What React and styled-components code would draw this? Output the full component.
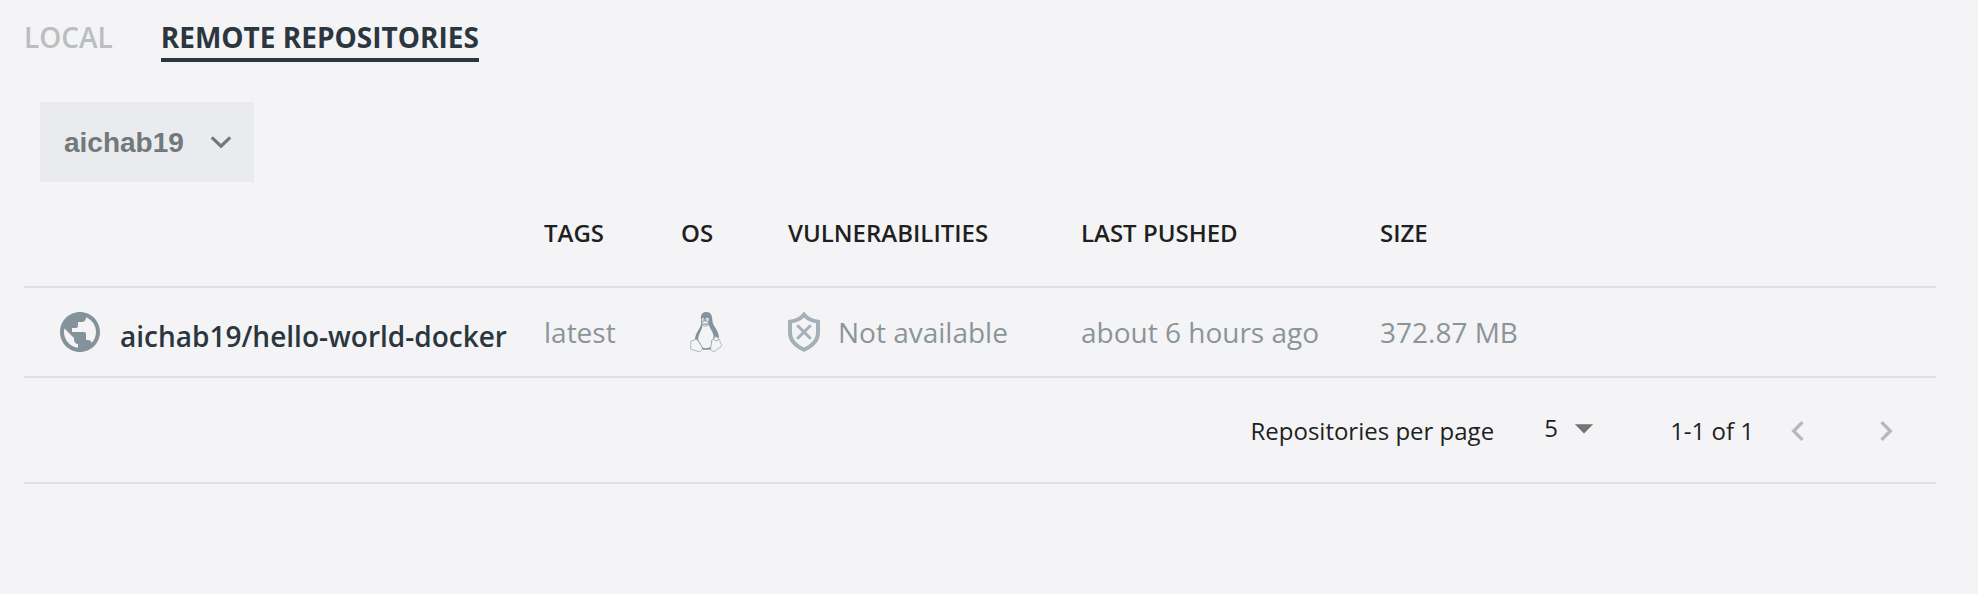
import React from "react";
import styled, { createGlobalStyle } from "styled-components";
import { MdPublic, MdChevronLeft, MdChevronRight, MdArrowDropDown } from "react-icons/md";

const GlobalStyle = createGlobalStyle`
  *, *::before, *::after { box-sizing: border-box; }
  html { background: #f4f4f6; }
  body { margin: 0; background: #f4f4f6; font-family: "Open Sans", sans-serif; color: #1f1f21; }
`;

const Page = styled.main`
  padding: 19px 42px 24px 24px;
`;

const Tabs = styled.nav`
  display: flex;
  align-items: flex-start;
  gap: 48px;
`;

const Tab = styled.button`
  padding: 0 0 3px;
  border: 0;
  border-bottom: 4px solid ${(p) => (p.$active ? "#2b363e" : "transparent")};
  background: none;
  color: ${(p) => (p.$active ? "#2b363e" : "#babebf")};
  font: ${(p) => (p.$active ? 700 : 600)} 28px/36px "Open Sans", sans-serif;
  cursor: pointer;
`;

const AccountPicker = styled.label`
  display: grid;
  align-items: center;
  width: 214px;
  height: 80px;
  margin: 40px 0 0 16px;
  background: #e9ebee;
  color: #71797b;

  > * { grid-area: 1 / 1; }
  > svg { justify-self: end; margin-right: 22px; pointer-events: none; }
`;

const AccountSelect = styled.select`
  width: 100%;
  height: 100%;
  padding: 2px 60px 0 24px;
  border: 0;
  appearance: none;
  background: none;
  color: inherit;
  font: 700 28px/40px "Liberation Sans", Arial, sans-serif;
`;

const Table = styled.table`
  width: 100%;
  border-collapse: separate;
  border-spacing: 0;
  table-layout: fixed;
`;

const Col = styled.col`
  width: ${(p) => p.$w};
`;

const HeadCell = styled.th`
  height: 106px;
  padding: 0 0 2px;
  border-bottom: 2px solid #dfe0e2;
  text-align: left;
  font-size: 24px;
  line-height: 32px;
  font-weight: 600;
`;

const Cell = styled.td`
  height: 90px;
  padding: 0;
  border-bottom: 2px solid #dfe0e2;
  color: #8b9499;
  font-size: 28px;
  line-height: 40px;
  white-space: nowrap;
`;

const Inline = styled.div`
  display: flex;
  align-items: center;
  gap: ${(p) => p.$gap};
  padding-left: ${(p) => p.$indent || 0};
`;

const RepoLink = styled.a`
  padding-top: 8px;
  color: #2b363e;
  font-weight: 600;
  text-decoration: none;
`;

const Pager = styled.footer`
  display: flex;
  align-items: center;
  justify-content: flex-end;
  height: 106px;
  padding: 2px 30px 0 0;
  border-bottom: 2px solid #dfe0e2;
  font-size: 24px;
  line-height: 32px;
`;

const PerPage = styled.div`
  display: flex;
  align-items: center;
  gap: 50px;
  margin-right: 64px;
`;

const SizePicker = styled.span`
  display: grid;
  align-items: center;
  width: 62px;
  padding-bottom: 6px;

  > * { grid-area: 1 / 1; }
  > svg { justify-self: end; color: #737373; pointer-events: none; }
`;

const SizeSelect = styled.select`
  width: 100%;
  height: 40px;
  padding: 0;
  border: 0;
  appearance: none;
  background: none;
  color: inherit;
  font: 400 24px/32px "Open Sans", sans-serif;
`;

const PageButtons = styled.div`
  display: flex;
  gap: 48px;
  margin-left: 24px;
`;

const PageButton = styled.button`
  display: flex;
  padding: 0;
  border: 0;
  background: none;
  color: #b8b8ba;
`;

const ChevronDown = () => (
  <svg width="22" height="14" viewBox="0 0 22 14" fill="none" stroke="currentColor" strokeWidth="3.2" aria-hidden="true">
    <path d="M1.800 2.400 11 11.200 20.200 2.400" />
  </svg>
);

const Tux = () => (
  <svg width="32" height="40" viewBox="0 0 32 40" role="img" aria-label="Linux">
    <path
      fill="#84939b"
      d="M16.2 0C12.600 0 10.800 2.400 10.900 6c.1 3 .4 5.300-.2 7.800C9.500 17 7 19.600 5.900 23c-.6 1.800-1 3.400-1.200 4.800L11 35.500l2 2.200h7l3-3.200 3-7.500 3-1.500c-.2-3.200-1.400-6-3-8.700-1.500-2.500-3.200-4.400-3.500-7.300C22.200 6.500 22.700 0 16.200 0Z"
    />
    <path
      fill="#f4f4f6"
      d="M12.600 12.900c1.200 2 4.400 1.900 6-.5 1 3.600 3.700 6.500 4.700 10 .5 2 .3 3.400-.3 4.300-1.800 1-1.900 4.300-2.100 8.100-2 1.600-5.700 1.800-8.200.6L8.300 27.700c-.3-1.600.2-3.600 1-5.500 1-2.700 2.900-5.500 3.300-9.300Z"
    />
    <ellipse cx="13" cy="7.800" rx="1.300" ry="1.800" fill="#f4f4f6" />
    <ellipse cx="17.200" cy="7.800" rx="1.600" ry="2" fill="#f4f4f6" />
    <circle cx="13.300" cy="8" r=".7" fill="#84939b" />
    <circle cx="16.900" cy="8" r=".8" fill="#84939b" />
    <path fill="#f4f4f6" stroke="#98a5ac" strokeWidth=".7" d="M11.600 11c1-1.400 2.500-2 3.500-1.900 1.500.1 3.400 1 3.400 1.900 0 1.500-2.500 3.200-3.700 3.200-1.400 0-3.200-1.700-3.200-3.200Zm.2.400c1.800 1.600 4 1.600 6.400 0" />
    <path
      fill="#f4f4f6"
      stroke="#98a5ac"
      strokeWidth=".8"
      d="M1.200 29c1-1 2.700-.2 3.700-1.400 1.200-1 2.500 0 3.300 1.500 1.200 2 3.300 4.500 3.900 6.500.7 2.500-1.500 4-4 3.900-2.200-.3-4.500-1.800-7-2.200-1.200-.4-.4-2-.3-3.300.1-1.500-.5-4 .4-5ZM22 28.500c.5-1.600 1.300-2 2-1.500 1 2.500 3.500 2 4.700.3.800-.3 1.200 1 1.400 2.500.3 1.500 1.700 2.200 1.500 3.500-.4 1.800-3.400 2.700-5 4.500-1.600 1.900-4.800 2.500-5.700-.3-.8-2.500.8-6 1.100-9Z"
    />
    <path fill="#f4f4f6" stroke="#98a5ac" strokeWidth=".8" d="M24 27c-.4-1.500.5-2.500 2-2.200 1.400.2 2.400 1 2.700 2.400-1 1.700-3.700 2-4.700-.2Z" />
  </svg>
);

const ShieldCross = () => (
  <svg width="32" height="40" viewBox="0 0 32 40" fill="none" stroke="#a5b1b8" strokeWidth="4" aria-hidden="true">
    <path d="M16 2.600C13.300 6.200 8.700 8.700 2 9.700V21c0 7.300 5.300 12.700 14 16.700 8.700-4 14-9.400 14-16.700V9.700C23.300 8.700 18.700 6.200 16 2.600Z" />
    <path strokeWidth="3" d="m9.200 13.200 13.600 13.600M22.800 13.200 9.200 26.800" />
  </svg>
);

const columns = [
  { label: "", width: "520px" },
  { label: "TAGS", width: "137px" },
  { label: "OS", width: "107px" },
  { label: "VULNERABILITIES", width: "293px" },
  { label: "LAST PUSHED", width: "299px" },
  { label: "SIZE", width: "auto" },
];

const repositories = [
  { name: "aichab19/hello-world-docker", tag: "latest", scan: "Not available", pushed: "about 6 hours ago", size: "372.87 MB" },
];

export default function App() {
  return (
    <Page>
      <GlobalStyle />
      <Tabs>
        <Tab type="button">LOCAL</Tab>
        <Tab type="button" $active aria-current="page">REMOTE REPOSITORIES</Tab>
      </Tabs>
      <AccountPicker>
        <AccountSelect aria-label="Account">
          <option>aichab19</option>
        </AccountSelect>
        <ChevronDown />
      </AccountPicker>
      <Table>
        <colgroup>
          {columns.map((c) => <Col key={c.label} $w={c.width} />)}
        </colgroup>
        <thead>
          <tr>
            {columns.map((c) => <HeadCell key={c.label} scope="col">{c.label}</HeadCell>)}
          </tr>
        </thead>
        <tbody>
          {repositories.map((r) => (
            <tr key={r.name}>
              <Cell>
                <Inline $gap="16px" $indent="32px">
                  <MdPublic size={48} color="#84939b" />
                  <RepoLink href="#repository">{r.name}</RepoLink>
                </Inline>
              </Cell>
              <Cell>{r.tag}</Cell>
              <Cell><Inline $indent="9px"><Tux /></Inline></Cell>
              <Cell><Inline $gap="18px"><ShieldCross />{r.scan}</Inline></Cell>
              <Cell>{r.pushed}</Cell>
              <Cell>{r.size}</Cell>
            </tr>
          ))}
        </tbody>
      </Table>
      <Pager>
        <PerPage>
          <label htmlFor="per-page">Repositories per page</label>
          <SizePicker>
            <SizeSelect id="per-page"><option>5</option></SizeSelect>
            <MdArrowDropDown size={44} />
          </SizePicker>
        </PerPage>
        <span>1-1 of 1</span>
        <PageButtons>
          <PageButton type="button" disabled aria-label="Previous page"><MdChevronLeft size={40} /></PageButton>
          <PageButton type="button" disabled aria-label="Next page"><MdChevronRight size={40} /></PageButton>
        </PageButtons>
      </Pager>
    </Page>
  );
}
